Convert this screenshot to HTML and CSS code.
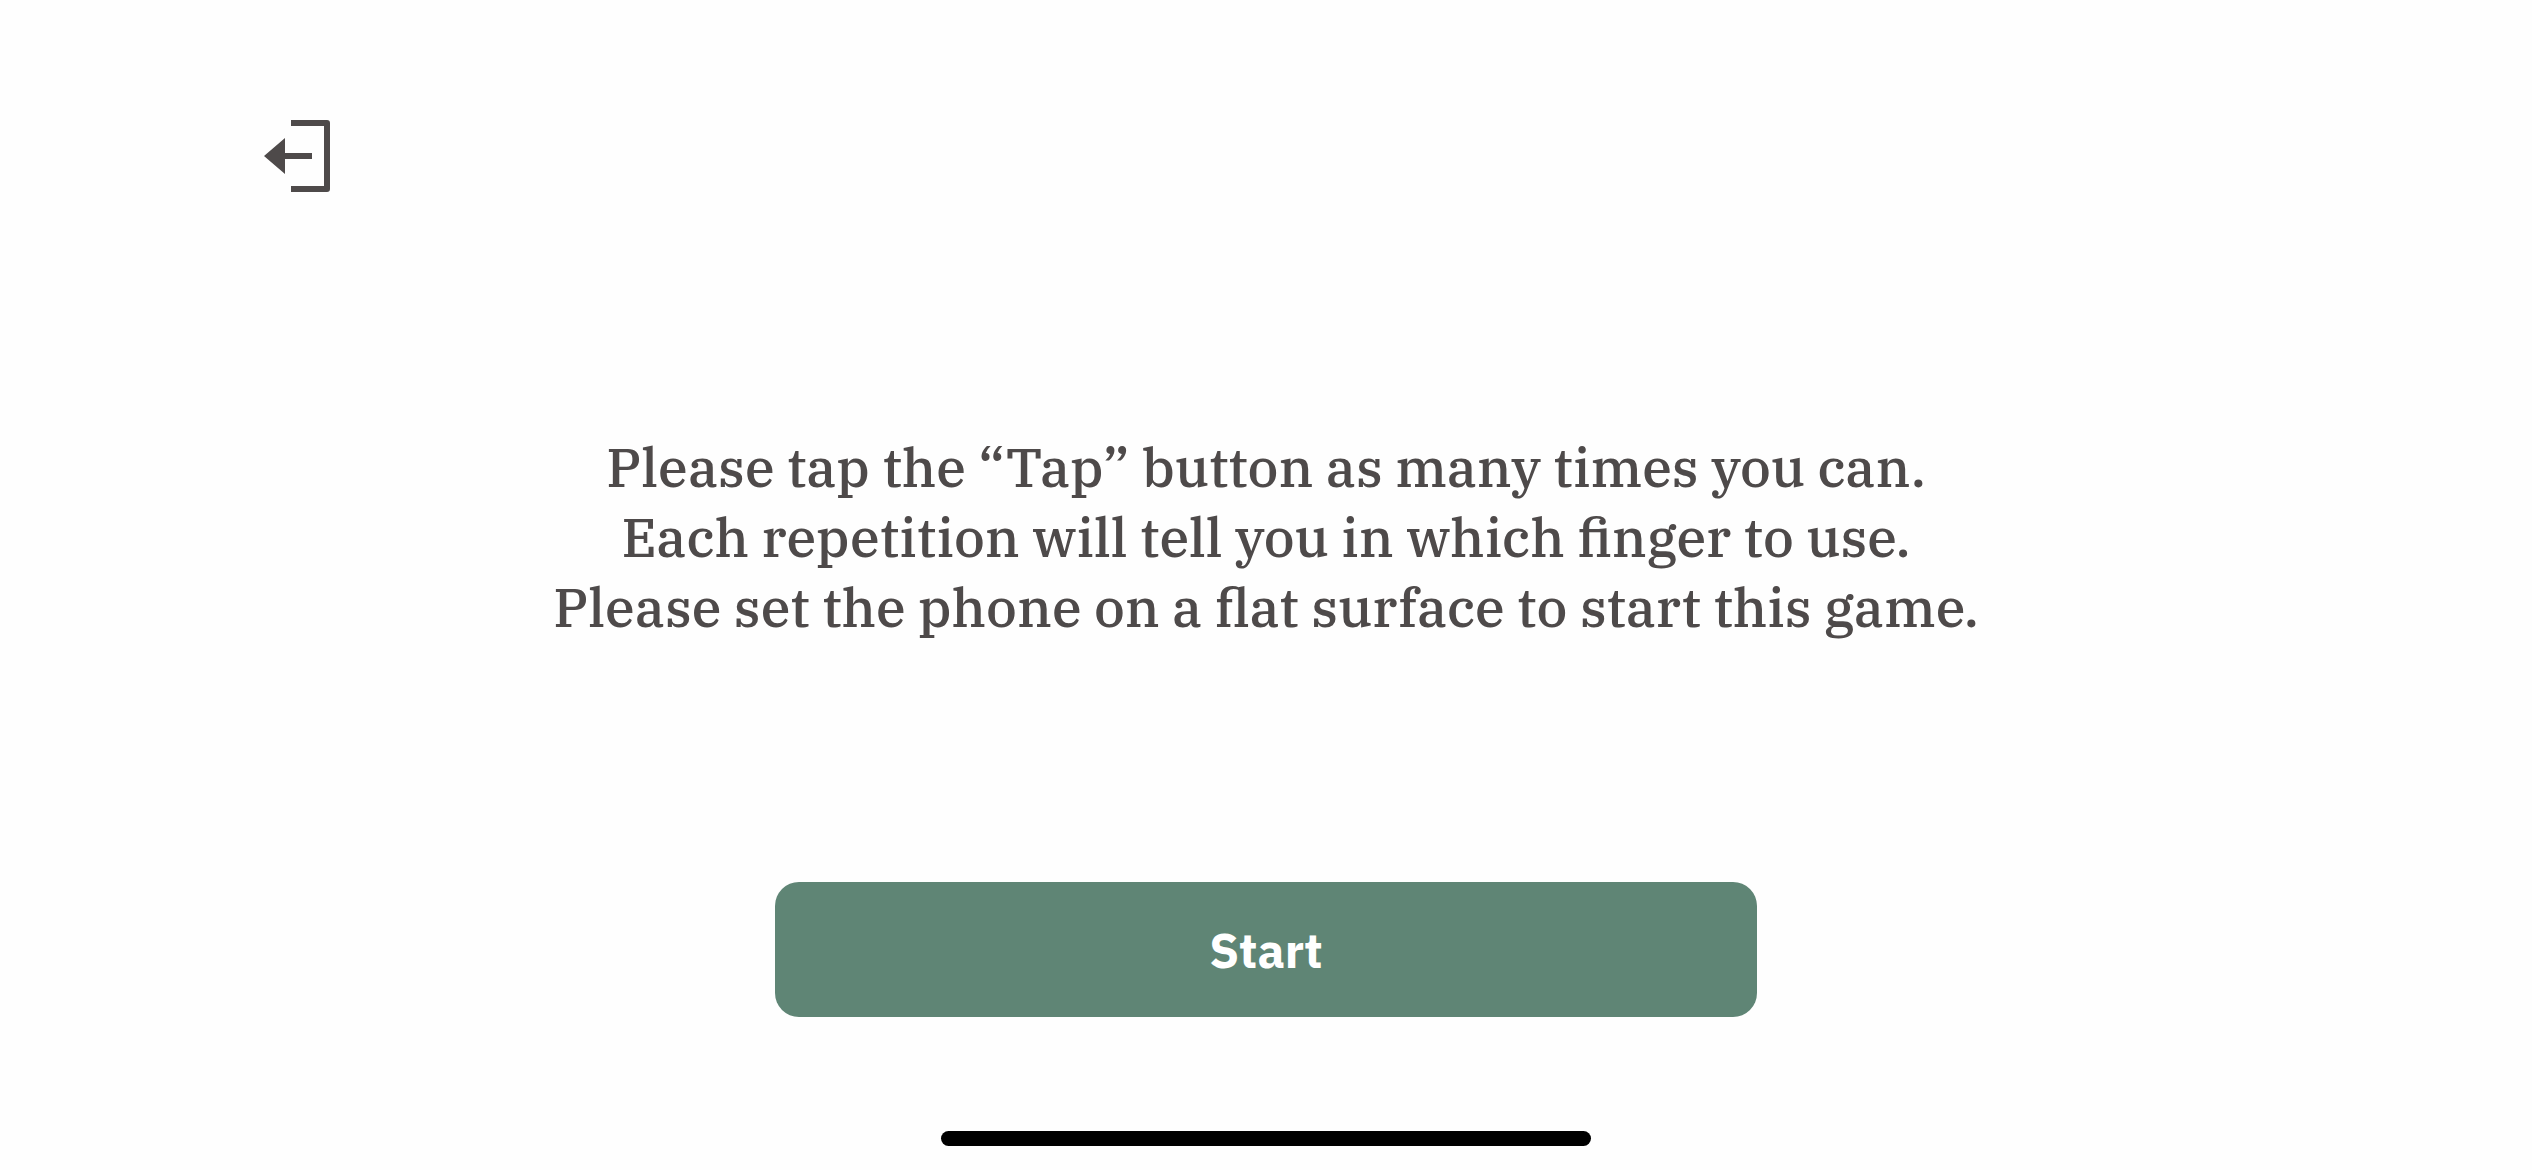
FILE: index.html
```html
<!DOCTYPE html>
<html lang="en">
<head>
  <meta charset="utf-8">
  <meta name="viewport" content="width=device-width, initial-scale=1">
  <title>Tap game</title>
  <link rel="stylesheet" href="styles.css">
</head>
<body>
  <div class="screen">
    <header class="top-bar">
      <button class="exit-button" type="button" aria-label="Exit">
        <svg class="exit-icon" viewBox="0 0 66 72" aria-hidden="true">
          <path d="M27 0H63Q66 0 66 3V69Q66 72 63 72H27V66H60V6H27Z"/>
          <path d="M0 36L21 18V33H48V39H21V54Z"/>
        </svg>
      </button>
    </header>
    <main class="content">
      <p class="instructions">
        Please tap the “Tap” button as many times you can.<br>
        Each repetition will tell you in which finger to use.<br>
        Please set the phone on a flat surface to start this game.
      </p>
      <button class="start-button" type="button">Start</button>
    </main>
    <div class="home-indicator"></div>
  </div>
</body>
</html>
```
FILE: styles.css
```css
* {
  box-sizing: border-box;
}

body {
  margin: 0;
  background: #fefefe;
  color: #4e4a4a;
}

.screen {
  display: flex;
  flex-direction: column;
  align-items: center;
  min-height: 100vh;
  padding: 120px 24px 24px;
}

.top-bar {
  display: flex;
  width: 100%;
  padding-left: 240px;
}

.exit-button {
  display: block;
  padding: 0;
  border: 0;
  background: none;
  color: inherit;
  cursor: pointer;
}

.exit-icon {
  display: block;
  width: 66px;
  height: 72px;
  fill: currentColor;
}

.content {
  display: flex;
  flex: 1;
  flex-direction: column;
  align-items: center;
  width: 100%;
}

.instructions {
  margin: auto 0;
  font-family: "IBM Plex Serif", "DejaVu Serif", serif;
  font-size: 54px;
  font-weight: 500;
  line-height: 70px;
  text-align: center;
}

.start-button {
  width: 39.5%;
  height: 135px;
  border: 0;
  border-radius: 24px;
  background: #5f8575;
  color: #fff;
  font-family: "IBM Plex Sans", "Noto Sans", sans-serif;
  font-size: 48px;
  font-weight: 700;
  cursor: pointer;
}

.home-indicator {
  width: 26.2%;
  height: 15px;
  margin-top: 114px;
  border-radius: 8px;
  background: #000;
}
```
